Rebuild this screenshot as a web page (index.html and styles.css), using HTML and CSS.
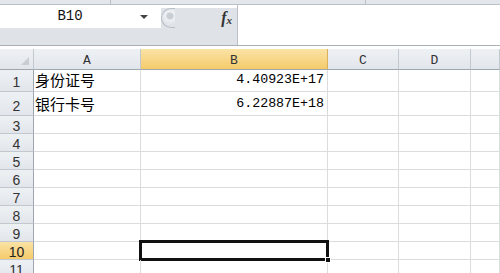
FILE: index.html
```html
<!DOCTYPE html>
<html lang="zh-CN">
<head>
  <meta charset="UTF-8" />
  <title>Book1 - Excel</title>
  <link rel="stylesheet" href="styles.css">
</head>
<body>

<!-- RIBBON EDGE -->
<div class="ribbon-edge">
  <span class="seg seg-1"></span>
  <span class="seg seg-2"></span>
  <span class="seg seg-3"></span>
</div>

<!-- FORMULA BAR -->
<div class="formula-bar">
  <div class="name-box">
    <span class="name-text">B10</span>
    <span class="name-arrow"></span>
  </div>
  <div class="fx-area">
    <span class="grip"></span>
    <span class="fx">f<sub>x</sub></span>
  </div>
  <div class="formula-input"></div>
</div>

<!-- SHEET -->
<div class="sheet">
  <div class="hd corner"><span class="tri"></span></div>
  <div class="hd col">A</div>
  <div class="hd col active">B</div>
  <div class="hd col">C</div>
  <div class="hd col">D</div>
  <div class="hd col"></div>

  <div class="hd rowh r1">1</div>
  <div class="cell r1 txt">身份证号</div>
  <div class="cell r1 num">4.40923E+17</div>
  <div class="cell r1"></div><div class="cell r1"></div><div class="cell r1"></div>

  <div class="hd rowh r2">2</div>
  <div class="cell r2 txt">银行卡号</div>
  <div class="cell r2 num">6.22887E+18</div>
  <div class="cell r2"></div><div class="cell r2"></div><div class="cell r2"></div>

  <div class="hd rowh">3</div><div class="cell"></div><div class="cell"></div><div class="cell"></div><div class="cell"></div><div class="cell"></div>
  <div class="hd rowh">4</div><div class="cell"></div><div class="cell"></div><div class="cell"></div><div class="cell"></div><div class="cell"></div>
  <div class="hd rowh">5</div><div class="cell"></div><div class="cell"></div><div class="cell"></div><div class="cell"></div><div class="cell"></div>
  <div class="hd rowh">6</div><div class="cell"></div><div class="cell"></div><div class="cell"></div><div class="cell"></div><div class="cell"></div>
  <div class="hd rowh">7</div><div class="cell"></div><div class="cell"></div><div class="cell"></div><div class="cell"></div><div class="cell"></div>
  <div class="hd rowh">8</div><div class="cell"></div><div class="cell"></div><div class="cell"></div><div class="cell"></div><div class="cell"></div>
  <div class="hd rowh">9</div><div class="cell"></div><div class="cell"></div><div class="cell"></div><div class="cell"></div><div class="cell"></div>
  <div class="hd rowh active">10</div><div class="cell"></div><div class="cell selected"><span class="handle"></span></div><div class="cell"></div><div class="cell"></div><div class="cell"></div>
  <div class="hd rowh">11</div><div class="cell"></div><div class="cell"></div><div class="cell"></div><div class="cell"></div><div class="cell"></div>
</div>

</body>
</html>
```

FILE: styles.css
```css
* {
  box-sizing: border-box;
  margin: 0;
  padding: 0;
}
body {
  width: 500px;
  height: 273px;
  overflow: hidden;
  background: #fff;
  font-family: "Liberation Sans", Arial, sans-serif;
  color: #222;
}

/* RIBBON EDGE */
.ribbon-edge {
  display: flex;
  height: 5px;
  background: #e3e7ec;
  border-bottom: 1px solid #b9c0c9;
}
.seg {
  height: 100%;
  border-right: 1px solid #b9c0c9;
}
.seg-1 { width: 111px; }
.seg-2 { width: 255px; }
.seg-3 { flex: 1; border-right: none; }

/* FORMULA BAR */
.formula-bar {
  display: flex;
  height: 41px;
  background: #fff;
  border-bottom: 1px solid #a9afb7;
}
.name-box {
  width: 161px;
  display: flex;
  align-items: flex-start;
  background: linear-gradient(#fff 0, #fff 23px, #dfe3e8 23px);
}
.name-text {
  width: 140px;
  padding-top: 3px;
  text-align: center;
  font-family: "Liberation Mono", monospace;
  font-size: 14px;
  color: #111;
}
.name-arrow {
  margin-top: 10px;
  border-left: 4px solid transparent;
  border-right: 4px solid transparent;
  border-top: 4px solid #444;
}
.fx-area {
  width: 76px;
  margin-top: 3px;
  display: flex;
  align-items: flex-start;
  justify-content: space-between;
  background: #dfe3e8;
}
.grip {
  width: 14px;
  height: 20px;
  border-radius: 10px 0 0 10px;
  border: 1px solid #b8bec7;
  border-right: none;
  background: radial-gradient(circle at 8px 7px, #c9ced5 0, #c9ced5 3px, #eef0f3 4px, #dfe3e8 9px);
}
.fx {
  margin: 1px 5px 0 0;
  font-family: "Liberation Serif", serif;
  font-style: italic;
  font-weight: bold;
  font-size: 16px;
  color: #333;
}
.fx sub {
  font-size: 11px;
  vertical-align: -1px;
}
.formula-input {
  flex: 1;
  background: #fff;
  border-left: 1px solid #b9c0c9;
}

/* SHEET */
.sheet {
  margin-top: 3px;
  display: grid;
  grid-template-columns: 34px 107px 187px 71px 72px 1fr;
  grid-template-rows: 21px 22px 24px;
  grid-auto-rows: 18px;
}
.hd {
  display: flex;
  align-items: center;
  justify-content: center;
  background: linear-gradient(#eef1f4, #e2e6eb);
  border-right: 1px solid #c2c8cf;
  border-bottom: 1px solid #c2c8cf;
  color: #333;
}
.corner {
  justify-content: flex-end;
  align-items: flex-end;
  padding: 0 4px 4px 0;
  border-bottom-color: #9ea6b0;
}
.tri {
  width: 0;
  height: 0;
  border-left: 8px solid transparent;
  border-bottom: 8px solid #c9ced5;
}
.col {
  padding-top: 2px;
  font-family: "Liberation Mono", monospace;
  font-size: 13px;
  border-bottom-color: #9ea6b0;
}
.col.active {
  background: linear-gradient(#fae3a6, #f5cb6b);
  border-right-color: #d9b15a;
}
.rowh {
  padding-top: 2px;
  font-size: 14px;
  border-right-color: #9ea6b0;
}
.rowh.r1, .rowh.r2 {
  align-items: flex-end;
  padding-bottom: 1px;
}
.rowh.active {
  background: linear-gradient(#fae3a6, #f5cb6b);
  color: #222;
}
.cell {
  position: relative;
  display: flex;
  align-items: flex-end;
  border-right: 1px solid #dadcdd;
  border-bottom: 1px solid #dadcdd;
  padding: 0 3px 2px;
  white-space: nowrap;
}
.txt {
  font-family: "Noto Sans CJK SC", sans-serif;
  font-size: 15px;
  line-height: 18px;
  color: #000;
  padding-left: 1px;
}
.num {
  justify-content: flex-end;
  font-family: "Liberation Mono", monospace;
  font-size: 13.3px;
  line-height: 18px;
  color: #000;
  padding-right: 3px;
}
.selected::after {
  content: "";
  position: absolute;
  left: -2px;
  top: -2px;
  right: -2px;
  bottom: -2px;
  border: 3px solid #111;
}
.handle {
  position: absolute;
  right: -4px;
  bottom: -4px;
  width: 6px;
  height: 6px;
  background: #111;
  border: 1px solid #fff;
  z-index: 1;
}
```
